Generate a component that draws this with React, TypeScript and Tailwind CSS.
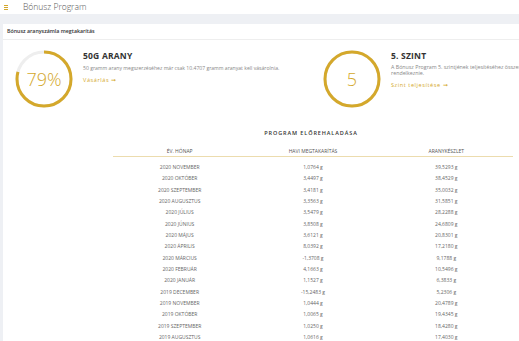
import React from "react";

const rows: [string, string, string][] = [
  ["2020 NOVEMBER", "1,0764 g", "39,5293 g"],
  ["2020 OKTÓBER", "3,4497 g", "38,4529 g"],
  ["2020 SZEPTEMBER", "3,4181 g", "35,0032 g"],
  ["2020 AUGUSZTUS", "3,3563 g", "31,5851 g"],
  ["2020 JÚLIUS", "3,5479 g", "28,2288 g"],
  ["2020 JÚNIUS", "3,8508 g", "24,6809 g"],
  ["2020 MÁJUS", "3,6121 g", "20,8301 g"],
  ["2020 ÁPRILIS", "8,0392 g", "17,2180 g"],
  ["2020 MÁRCIUS", "-1,3708 g", "9,1788 g"],
  ["2020 FEBRUÁR", "4,1663 g", "10,5496 g"],
  ["2020 JANUÁR", "1,1527 g", "6,3833 g"],
  ["2019 DECEMBER", "-15,2483 g", "5,2306 g"],
  ["2019 NOVEMBER", "1,0444 g", "20,4789 g"],
  ["2019 OKTÓBER", "1,0065 g", "19,4345 g"],
  ["2019 SZEPTEMBER", "1,0250 g", "18,4280 g"],
  ["2019 AUGUSZTUS", "1,0616 g", "17,4030 g"],
];

const GOLD = "#d4a82b";

function Ring({ pct, label }: { pct: number; label: string }) {
  const r = 27;
  const c = 2 * Math.PI * r;
  return (
    <div className="relative w-[58px] h-[58px] shrink-0">
      <svg width="58" height="58" viewBox="0 0 58 58">
        <circle cx="29" cy="29" r={r} fill="none" stroke="#eeeeee" strokeWidth="3" />
        <circle
          cx="29"
          cy="29"
          r={r}
          fill="none"
          stroke={GOLD}
          strokeWidth="3"
          strokeDasharray={`${(c * pct) / 100} ${c}`}
          transform="rotate(-90 29 29)"
        />
      </svg>
      <div className="absolute inset-0 flex items-center justify-center text-[18px] font-light text-[#d4a82b] leading-none">
        {label}
      </div>
    </div>
  );
}

export default function App() {
  return (
    <div
      className="w-[519px] h-[341px] overflow-hidden bg-[#eef0f4]"
      style={{ fontFamily: '"Open Sans", "Liberation Sans", sans-serif' }}
    >
      <div className="w-[640px]">
        {/* top bar */}
        <div className="h-[14px] bg-white flex items-center">
          <div className="ml-[4px] w-[4px] flex flex-col gap-[1px]">
            <div className="h-[1px] bg-[#d4a82b]" />
            <div className="h-[1px] bg-[#d4a82b]" />
            <div className="h-[1px] bg-[#d4a82b]" />
          </div>
          <div className="ml-[15px] text-[8.5px] font-light text-[#555] leading-none">Bónusz Program</div>
        </div>
        <div className="h-[10px]" />
        {/* card */}
        <div className="ml-[3px] w-[616px] h-[330px] bg-white">
          <div className="h-[16px] border-b border-[#eeeeee] flex items-center pl-[4px] text-[5.3px] font-semibold text-[#333]">
            Bónusz aranyszámla megtakarítás
          </div>
          <div className="flex">
            <div className="w-[308px] pl-[12px] pt-[10px] flex gap-[10px]">
              <Ring pct={79} label="79%" />
              <div className="pt-[1px]">
                <div className="text-[8.5px] font-bold text-[#333] leading-[10px] tracking-[0.2px]">50G ARANY</div>
                <div className="mt-[4px] text-[5.1px] text-[#888] leading-[6px] whitespace-nowrap">
                  50 gramm arany megszerzéséhez már csak 10.4707 gramm aranyat kell vásárolnia.
                </div>
                <div className="mt-[6px] text-[5.5px] text-[#d4a82b] tracking-[0.6px] leading-[6px] flex items-center gap-[2px]">
                  Vásárlás <span className="text-[6px]">➞</span>
                </div>
              </div>
            </div>
            <div className="w-[308px] pl-[12px] pt-[10px] flex gap-[10px]">
              <Ring pct={100} label="5" />
              <div className="pt-[1px] w-[230px]">
                <div className="text-[8.5px] font-bold text-[#333] leading-[10px] tracking-[0.2px]">5. SZINT</div>
                <div className="mt-[4px] text-[5.3px] text-[#888] leading-[5.5px] w-[212px]">
                  A Bónusz Program 5. szintjének teljesítéséhez összesen 50 gramm arannyal kell rendelkeznie.
                </div>
                <div className="mt-[6px] text-[5.5px] text-[#d4a82b] tracking-[0.6px] leading-[6px] flex items-center gap-[2px]">
                  Szint teljesítése <span className="text-[6px]">➞</span>
                </div>
              </div>
            </div>
          </div>
          <div className="mt-[22px] text-center text-[5.5px] font-semibold tracking-[0.9px] text-[#333] leading-[6px]">
            PROGRAM ELŐREHALADÁSA
          </div>
          <div className="ml-[110px] w-[400px] mt-[11px]">
            <div className="grid grid-cols-3 border-b border-[#ecdcae] h-[10px] items-center text-center text-[5px] text-[#555] leading-none">
              <div>ÉV. HÓNAP</div>
              <div>HAVI MEGTAKARÍTÁS</div>
              <div>ARANYKÉSZLET</div>
            </div>
            <div className="pt-[5px]">
              {rows.map((r) => (
                <div key={r[0]} className="grid grid-cols-3 h-[11.33px] items-center text-center text-[5px] text-[#666] leading-none">
                  <div>{r[0]}</div>
                  <div>{r[1]}</div>
                  <div>{r[2]}</div>
                </div>
              ))}
            </div>
          </div>
        </div>
      </div>
    </div>
  );
}
